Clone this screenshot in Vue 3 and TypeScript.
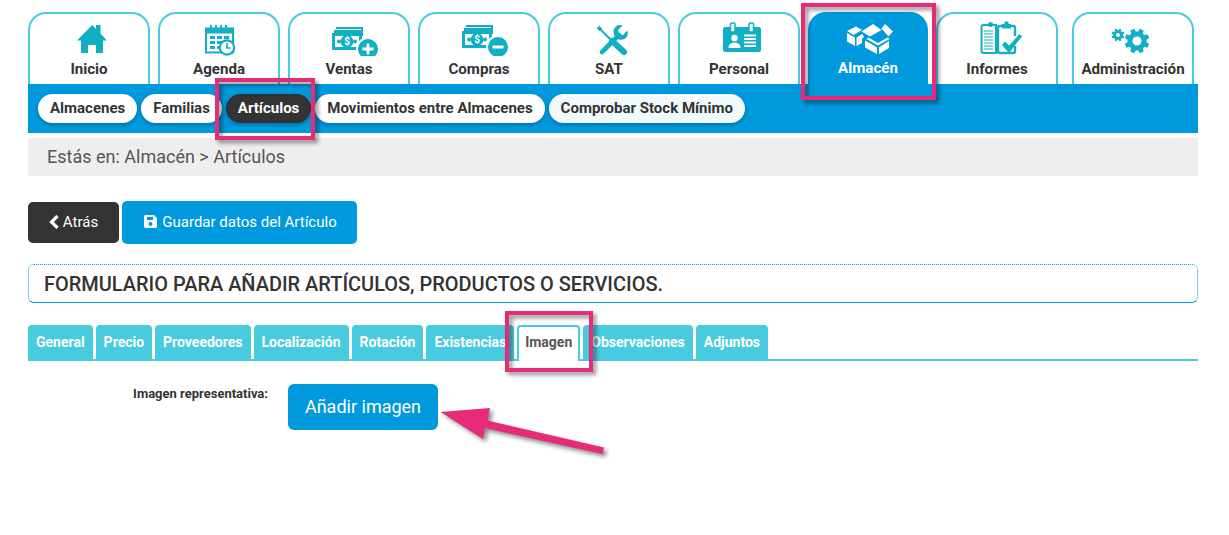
<script setup lang="ts">
interface MainTab { label: string; icon: string; active?: boolean; push?: boolean }
const mainTabs: MainTab[] = [
  { label: 'Inicio', icon: 'home' },
  { label: 'Agenda', icon: 'agenda' },
  { label: 'Ventas', icon: 'ventas' },
  { label: 'Compras', icon: 'compras' },
  { label: 'SAT', icon: 'sat' },
  { label: 'Personal', icon: 'personal' },
  { label: 'Almacén', icon: 'almacen', active: true },
  { label: 'Informes', icon: 'informes' },
  { label: 'Administración', icon: 'admin', push: true },
]
const pills = [
  { label: 'Almacenes' },
  { label: 'Familias' },
  { label: 'Artículos', active: true },
  { label: 'Movimientos entre Almacenes' },
  { label: 'Comprobar Stock Mínimo', soft: true },
]
const formTabs = ['General', 'Precio', 'Proveedores', 'Localización', 'Rotación', 'Existencias', 'Imagen', 'Observaciones', 'Adjuntos']

function gear(cx: number, cy: number, outer: number, inner: number, teeth: number): string {
  const pts: string[] = []
  const step = (Math.PI * 2) / teeth
  for (let i = 0; i < teeth; i++) {
    const a = i * step + step / 2
    const offs: [number, number][] = [[-0.34, inner], [-0.22, outer], [0.22, outer], [0.34, inner]]
    for (const [o, r] of offs) {
      const t = a + o * step
      pts.push(`${(cx + Math.cos(t) * r).toFixed(2)} ${(cy + Math.sin(t) * r).toFixed(2)}`)
    }
  }
  return 'M' + pts.join('L') + 'Z'
}
const bigGear = gear(34, 21, 12.5, 9.5, 8)
const smallGear = gear(15, 15, 6.5, 4.8, 8)
</script>

<template>
  <div class="page">
    <nav class="main-tabs">
      <a v-for="t in mainTabs" :key="t.label" class="main-tab" :class="{ active: t.active, push: t.push }">
        <svg class="tab-icon" width="60" height="36" viewBox="0 0 60 36">
          <template v-if="t.icon === 'home'">
            <path class="fill" d="M18 20.5 33.2 5l3.8 4V5h4.500v8.600l6.500 6.900h-4V33h-7v-8h-8v8h-7V20.500z" />
          </template>
          <template v-else-if="t.icon === 'agenda'">
            <rect class="line" x="17" y="8.500" width="27" height="24" stroke-width="2" />
            <path class="fill" d="M17 8h27v5.500H17zM21 5h2v5h-2zM26 5h2v5h-2zM31 5h2v5h-2zM36 5h2v5h-2z" />
            <path class="fill" d="M21 16h5v3h-5zM28 16h5v3h-5zM35 16h5v3h-5zM21 21h5v3h-5zM28 21h5v3h-5zM21 26h5v3h-5zM28 26h3v3h-3z" />
            <circle cx="38" cy="27.500" r="7.200" fill="#fff" stroke="#10afc3" stroke-width="2.200" />
            <path d="M38 23v5h3.600" fill="none" stroke="#10afc3" stroke-width="1.600" />
          </template>
          <template v-else-if="t.icon === 'ventas' || t.icon === 'compras'">
            <g :transform="t.icon === 'compras' ? 'translate(0 -2)' : ''">
              <path class="fill" d="M17 7h27v9h-2V9H17zM15 10h27v3H15z" />
              <path class="fill" fill-rule="evenodd" d="M13 13h30v17H13zM16 16v11h24V16z" />
              <circle class="fill" cx="28" cy="21.500" r="6.400" />
              <circle class="fill" cx="20" cy="21.500" r="2" />
              <circle class="fill" cx="36" cy="21.500" r="2" />
              <text x="28" y="25" class="dollar">$</text>
              <circle class="fill" cx="49" cy="29" r="11" stroke="#fff" stroke-width="2" />
              <path v-if="t.icon === 'ventas'" d="M49 23.500v11M43.500 29h11" stroke="#fff" stroke-width="2.800" />
              <path v-else d="M43.500 29h11" stroke="#fff" stroke-width="3" />
            </g>
          </template>
          <template v-else-if="t.icon === 'sat'">
            <path d="M23 32 40 15" stroke="#10afc3" stroke-width="4.600" stroke-linecap="round" fill="none" />
            <path class="fill" d="M34.500 12c0-5 4.500-8 9-6.500L39 10l1 4 4 1 4.500-4.500c1.500 5-2 9.500-6.500 9.300-2.500-.100-7.500-3-7.500-7.800z" />
            <path d="M20 8l17 17" stroke="#10afc3" stroke-width="2" fill="none" />
            <path d="M19 7l3 3" stroke="#10afc3" stroke-width="3.600" fill="none" />
            <path d="M33 21 45 32" stroke="#10afc3" stroke-width="6" stroke-linecap="round" fill="none" />
          </template>
          <template v-else-if="t.icon === 'personal'">
            <rect class="fill" x="14" y="7" width="38" height="25" rx="2.500" />
            <rect x="21.500" y="3" width="4.500" height="9" rx="1" fill="#fff" stroke="#10afc3" stroke-width="1.500" />
            <rect x="40" y="3" width="4.500" height="9" rx="1" fill="#fff" stroke="#10afc3" stroke-width="1.500" />
            <circle cx="25.500" cy="18" r="3.200" fill="#fff" />
            <path d="M19.500 28c0-4 3-5.500 6-5.500s6 1.500 6 5.500z" fill="#fff" />
            <path d="M35 15.500h12M35 19h12M35 22.500h12M35 26h12" stroke="#fff" stroke-width="1.800" />
          </template>
          <template v-else-if="t.icon === 'almacen'">
            <path fill="#fff" d="M9 11 18 6.500l6 3.500-8.500 5zM9 13l8 4.500V26l-8-4.500zM18.500 17.500l6-3.500 1.500 3-2 1.500V23l-5.500 3z" />
            <path fill="#fff" d="M23.500 11.500 35 4l8.500 6-11.500 6.500zM43.500 8.500 47 4l8 7.500-4.500 5z" />
            <path fill="#fff" d="M30.500 17.500l9.500 5.500 9.500-5.500 2 1.500L40 25.500 28.500 19zM27 20.500l12 6.800V34l-12-6.500zM41 27.300l10-6.300v7l-10 6z" />
          </template>
          <template v-else-if="t.icon === 'informes'">
            <path class="line" stroke-width="2" d="M24 5h-7.500a2 2 0 0 0-2 2v24a2 2 0 0 0 2 2H29V5z" />
            <path class="line" stroke-width="1.200" d="M17 11h9M17 14h9M17 17h9M17 20h9M17 23h9M17 26h9M17 29h9" />
            <circle class="fill" cx="23.500" cy="4.500" r="2.500" />
            <path class="line" stroke-width="2.400" d="M48 26v5a2 2 0 0 1-2 2H33a2 2 0 0 1-2-2V8a2 2 0 0 1 2-2h13a2 2 0 0 1 2 2v8" />
            <path class="fill" d="M35 4h9v4.500h-9zM37.500 1.500h4v4h-4z" />
            <path class="fill" d="M35 25l3-3.500 4 4L52.500 14l2.500 2.500L42 33z" />
          </template>
          <template v-else>
            <path class="fill" fill-rule="evenodd" :d="bigGear + 'M38.500 21a4.500 4.500 0 1 0-9 0 4.500 4.500 0 1 0 9 0z'" />
            <path class="fill" fill-rule="evenodd" :d="smallGear + 'M17 15a2 2 0 1 0-4 0 2 2 0 1 0 4 0z'" />
          </template>
        </svg>
        <span class="tab-label">{{ t.label }}</span>
      </a>
    </nav>

    <div class="sub-bar">
      <a v-for="p in pills" :key="p.label" class="pill" :class="{ active: p.active, soft: p.soft }">{{ p.label }}</a>
    </div>

    <div class="crumb">Estás en: Almacén &gt; Artículos</div>

    <div class="actions">
      <button class="btn dark">
        <svg width="11" height="14" viewBox="0 0 11 14"><path d="M8.500 1 2.500 7l6 6" fill="none" stroke="#fff" stroke-width="3.200" /></svg>
        Atrás
      </button>
      <button class="btn blue">
        <svg width="13" height="13" viewBox="0 0 13 13"><path fill="#fff" fill-rule="evenodd" d="M1.500 0H10l3 3v8.500a1.500 1.500 0 0 1-1.500 1.500h-10A1.500 1.500 0 0 1 0 11.500v-10A1.500 1.500 0 0 1 1.500 0zM3 2v3h6V2zM6.500 7a2 2 0 1 0 0 4 2 2 0 0 0 0-4z" /></svg>
        Guardar datos del Artículo
      </button>
    </div>

    <h1 class="title">FORMULARIO PARA AÑADIR ARTÍCULOS, PRODUCTOS O SERVICIOS.</h1>

    <div class="form-tabs">
      <a v-for="f in formTabs" :key="f" class="form-tab" :class="{ active: f === 'Imagen' }">{{ f }}</a>
    </div>

    <div class="form-row">
      <label class="form-label">Imagen representativa:</label>
      <button class="add-btn">Añadir imagen</button>
    </div>

    <svg class="notes" width="1229" height="535" viewBox="0 0 1229 535">
      <g class="note-shapes">
        <rect x="803" y="5" width="131" height="93" />
        <rect x="217" y="80" width="96" height="58" />
        <rect x="507" y="313" width="84" height="57" />
        <path class="arrow" d="M440.500 412 490 408l-2.500 12.500L604 447.500l-1.500 6.500L485 428l-2 11z" />
      </g>
    </svg>
  </div>
</template>

<style>
html, body { margin: 0; background: #fff; overflow: hidden; }
</style>

<style scoped>
.page {
  position: relative;
  box-sizing: border-box;
  width: 1229px;
  height: 535px;
  padding: 12px 31px 0 28px;
  font-family: Roboto, "Liberation Sans", sans-serif;
  color: #333;
  overflow: hidden;
}
.main-tabs { display: flex; gap: 8px; height: 72px; }
.main-tab {
  box-sizing: border-box;
  width: 122px;
  height: 72px;
  border: 2px solid #48cbdf;
  border-bottom: 0;
  border-radius: 18px 18px 0 0;
  background: #fff;
  display: flex;
  flex-direction: column;
  align-items: center;
  padding-top: 6px;
  font-size: 15.1px;
  font-weight: 700;
  color: #333;
}
.main-tab.active { width: 120px; background: #0099dd; border-color: #0099dd; color: #fff; }
.main-tab.active .tab-label { margin-top: 4px; }
.main-tab.push { margin-left: 6px; }
.tab-icon { flex: none; display: block; }
.tab-label { margin-top: 5px; line-height: 17px; white-space: nowrap; }
.fill { fill: #10afc3; }
.line { fill: none; stroke: #10afc3; }
.dollar { font: 700 10px Roboto, sans-serif; fill: #fff; text-anchor: middle; }

.sub-bar {
  height: 49px;
  background: #0099dd;
  display: flex;
  align-items: center;
  gap: 4px;
  padding: 0 10px;
  box-sizing: border-box;
}
.pill {
  height: 29px;
  line-height: 29px;
  padding: 0 12px;
  border-radius: 15px;
  background: #fff;
  font-size: 15px;
  font-weight: 700;
  color: #333;
  box-shadow: 0 2px 4px rgba(0, 0, 0, .25);
  white-space: nowrap;
}
.pill.active { background: #333; color: #fff; }
.pill.soft { background: #f1f9fc; }

.crumb {
  margin-top: 5px;
  height: 38px;
  line-height: 38px;
  background: #eee;
  padding-left: 19px;
  font-size: 18px;
  color: #555;
}
.actions { display: flex; align-items: center; gap: 3px; margin-top: 25px; }
.btn {
  font-family: inherit;
  font-size: 15px;
  color: #fff;
  border: 0;
  border-radius: 5px;
  display: flex;
  align-items: center;
  justify-content: center;
  gap: 3px;
  padding: 0 0 2px;
}
.btn.dark { background: #333; width: 91px; height: 41px; }
.btn.blue { background: #0099dd; width: 235px; height: 43px; gap: 5px; padding-left: 2px; }

.title {
  box-sizing: border-box;
  margin: 20px 0 0;
  height: 39px;
  line-height: 38px;
  padding-left: 15px;
  border: 1px dotted #0099dd;
  border-bottom: 1px solid #0099dd;
  border-radius: 6px;
  font-size: 19.97px;
  font-weight: 500;
  color: #333;
}
.form-tabs {
  display: flex;
  gap: 3px;
  margin-top: 22px;
  height: 36px;
  box-sizing: border-box;
  border-bottom: 2px solid #48cbdf;
}
.form-tab {
  box-sizing: border-box;
  height: 34px;
  line-height: 34px;
  padding: 0 8px;
  background: #48cbdf;
  color: #fff;
  border-radius: 4px 4px 0 0;
  font-size: 14px;
  font-weight: 700;
  white-space: nowrap;
}
.form-tab.active {
  height: 36px;
  background: #fff;
  color: #555;
  border: 2px solid #48cbdf;
  border-bottom: 0;
  line-height: 31px;
  padding: 0 6px;
}
.form-row { display: flex; align-items: flex-start; margin-top: 23px; }
.form-label {
  width: 240px;
  text-align: right;
  font-size: 13px;
  font-weight: 700;
  line-height: 20px;
}
.add-btn {
  margin-left: 20px;
  width: 150px;
  height: 46px;
  border: 0;
  border-radius: 6px;
  background: #0099dd;
  color: #fff;
  font-family: inherit;
  font-size: 18px;
  padding: 0 0 2px;
}
.notes { position: absolute; left: 0; top: 0; pointer-events: none; }
.note-shapes { filter: drop-shadow(3px 3px 2px rgba(0, 0, 0, .45)); }
.note-shapes rect { fill: none; stroke: #e62b78; stroke-width: 4; }
.arrow { fill: #e62b78; }
</style>
